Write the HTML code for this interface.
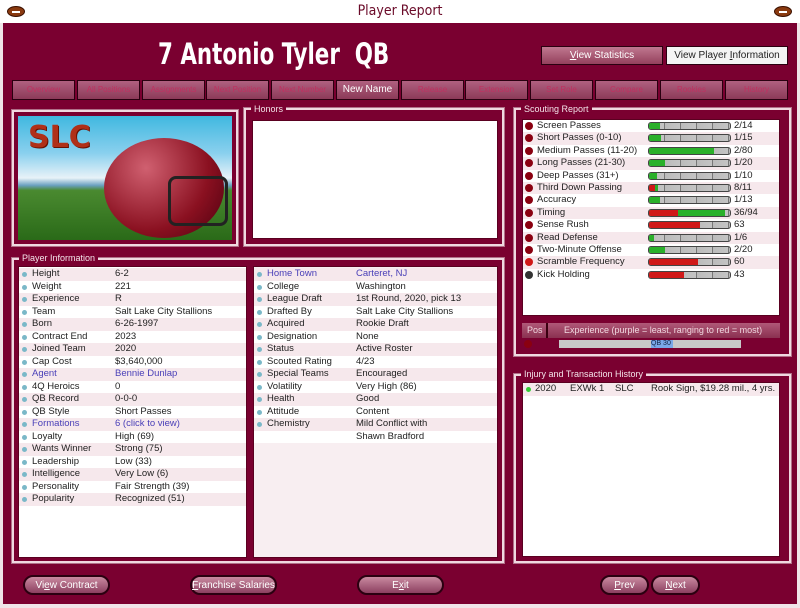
<!DOCTYPE html>
<html><head><meta charset="utf-8"><style>
*{margin:0;padding:0;box-sizing:border-box}
body{width:800px;height:608px;background:#f0e4e8;font-family:"Liberation Sans",sans-serif;position:relative;overflow:hidden}
.a{position:absolute}
#title{left:0;top:0;width:800px;height:23px;background:#fff;text-align:center;font-size:14px;color:#6a0a28;line-height:23px;font-family:"DejaVu Sans Condensed","Liberation Sans",sans-serif}
.ball{width:18px;height:11px;border-radius:50%;background:#8a3a10;border:1px solid #3a1000;top:6px}
.ball:after{content:"";position:absolute;left:4px;top:4px;width:8px;height:2px;background:#fff}
#main{left:3px;top:23px;width:794px;height:581px;background:#7a0030}
#name{left:158px;top:37px;font-size:29px;color:#fff;font-family:"DejaVu Sans Condensed","Liberation Sans",sans-serif;font-weight:bold;transform:scaleX(.82);transform-origin:left;white-space:pre}
.btn{background:linear-gradient(#c07890,#94405c);border:1px solid #2a0010;color:#fff;font-size:10px;text-align:center}
.tab{top:80px;height:20px;width:63px;background:linear-gradient(#b06080,#8c3a58);border:1px solid #2a0010;color:#c03060;font-size:8px;line-height:18px;text-align:center}
.fs{border:2px solid #f0d8e0;outline:1px solid #b07088}
.lg{font-size:9px;color:#f4e4ea;background:#7a0030;padding:0 3px;line-height:10px}
.wb{background:#fff;border:1px solid #5a0020}
.row{height:12.5px;font-size:9.5px;line-height:12.5px;color:#222;position:relative;white-space:nowrap}
.row:nth-child(odd){background:#f6e8ec}
.row i{position:absolute;left:3px;top:4px;width:5px;height:5px;border-radius:50%;background:#7ab8c8}
.row span{position:absolute}
.bl{color:#4a40b8}
.sr{height:12.4px;font-size:9.5px;line-height:12.4px;color:#222;position:relative}
.sr:nth-child(even){background:#f6e8ec}
.sr b{position:absolute;left:2px;top:2px;width:8px;height:8px;border-radius:50%;background:#8a0010;font-weight:normal}
.sr span{position:absolute;left:14px}
.bar{position:absolute;left:125px;top:2px;width:83px;height:8px;border:1px solid #444;border-radius:3px;background:repeating-linear-gradient(90deg,#bbb 0,#c4c4c4 15px,#777 15px,#777 16px);overflow:hidden}
.bar u{position:absolute;top:0;height:100%;left:0}
.g{background:#2ab02a}.r{background:#d01818}
.sr em{position:absolute;left:211px;font-style:normal}
.pb{border-radius:10px;height:20px;line-height:18px;background:linear-gradient(#c98aa0,#8c4060);border:2px solid #2a0010;color:#fff;font-size:10px;text-align:center;top:575px}
</style></head><body>
<div class="a" id="title">Player Report</div>
<div class="a ball" style="left:7px"></div><div class="a ball" style="left:774px"></div>
<div class="a" id="main"></div>
<div class="a" id="name">7 Antonio Tyler  QB</div>
<div class="a btn" style="left:541px;top:46px;width:122px;height:19px;line-height:17px"><u>V</u>iew Statistics</div>
<div class="a btn" style="left:666px;top:46px;width:122px;height:19px;line-height:17px;background:#f4f4f4;color:#222">View Player <u>I</u>nformation</div>

<div class="a tab" style="left:12px">Overview</div>
<div class="a tab" style="left:77px">All Positions</div>
<div class="a tab" style="left:142px">Assignments</div>
<div class="a tab" style="left:206px">Next Position</div>
<div class="a tab" style="left:271px">Next Number</div>
<div class="a tab" style="left:336px;color:#fff;font-size:10px">New Name</div>
<div class="a tab" style="left:401px">Release</div>
<div class="a tab" style="left:465px">Extension</div>
<div class="a tab" style="left:530px">Set Role</div>
<div class="a tab" style="left:595px">Compare</div>
<div class="a tab" style="left:660px">Rookies</div>
<div class="a tab" style="left:725px;width:63px">History</div>

<div class="a fs" style="left:12px;top:110px;width:226px;height:136px"></div>
<div class="a" style="left:18px;top:116px;width:214px;height:124px;overflow:hidden;background:linear-gradient(#40b8e0 0,#8ad0ee 30%,#e8f2f8 50%,#6aa0c0 56%,#4a8a30 60%,#2a6a18 100%)">
 <div class="a" style="left:10px;top:4px;font-size:30px;font-weight:bold;color:#b03018;font-family:'DejaVu Sans';text-shadow:1px 1px 0 #6a1000">SLC</div>
 <div class="a" style="left:86px;top:22px;width:120px;height:100px;border-radius:50%;background:radial-gradient(circle at 35% 30%,#d06070,#8a1020 60%,#4a0010)"></div>
 <div class="a" style="left:150px;top:60px;width:60px;height:50px;border:3px solid #222;border-radius:8px"></div>
</div>

<div class="a fs" style="left:244px;top:108px;width:260px;height:138px"></div>
<div class="a lg" style="left:251px;top:104px">Honors</div>
<div class="a wb" style="left:252px;top:120px;width:246px;height:119px"></div>

<div class="a fs" style="left:514px;top:108px;width:277px;height:248px"></div>
<div class="a lg" style="left:521px;top:104px">Scouting Report</div>
<div class="a wb" style="left:522px;top:119px;width:258px;height:197px">
<div class="sr"><b></b><span>Screen Passes</span><div class="bar"><u class="g" style="width:14%"></u></div><em>2/14</em></div>
<div class="sr"><b></b><span>Short Passes (0-10)</span><div class="bar"><u class="g" style="width:15%"></u></div><em>1/15</em></div>
<div class="sr"><b></b><span>Medium Passes (11-20)</span><div class="bar"><u class="g" style="width:80%"></u></div><em>2/80</em></div>
<div class="sr"><b></b><span>Long Passes (21-30)</span><div class="bar"><u class="g" style="width:20%"></u></div><em>1/20</em></div>
<div class="sr"><b></b><span>Deep Passes (31+)</span><div class="bar"><u class="g" style="width:10%"></u></div><em>1/10</em></div>
<div class="sr"><b></b><span>Third Down Passing</span><div class="bar"><u class="g" style="width:11%"></u><u class="r" style="width:8%"></u></div><em>8/11</em></div>
<div class="sr"><b></b><span>Accuracy</span><div class="bar"><u class="g" style="width:13%"></u></div><em>1/13</em></div>
<div class="sr"><b></b><span>Timing</span><div class="bar"><u class="g" style="width:94%"></u><u class="r" style="width:36%"></u></div><em>36/94</em></div>
<div class="sr"><b></b><span>Sense Rush</span><div class="bar"><u class="r" style="width:63%"></u></div><em>63</em></div>
<div class="sr"><b></b><span>Read Defense</span><div class="bar"><u class="g" style="width:6%"></u></div><em>1/6</em></div>
<div class="sr"><b></b><span>Two-Minute Offense</span><div class="bar"><u class="g" style="width:20%"></u></div><em>2/20</em></div>
<div class="sr"><b style="background:#d01818"></b><span>Scramble Frequency</span><div class="bar"><u class="r" style="width:60%"></u></div><em>60</em></div>
<div class="sr"><b style="background:#333"></b><span>Kick Holding</span><div class="bar"><u class="r" style="width:43%"></u></div><em>43</em></div>
</div>
<div class="a" style="left:522px;top:323px;width:258px;height:15px;background:linear-gradient(#b05878,#8a3050);font-size:9px;color:#f0d8e0;line-height:15px">
 <span class="a" style="left:5px">Pos</span><span class="a" style="left:24px;top:0;width:2px;height:15px;background:#3a0010"></span><span class="a" style="left:42px">Experience (purple = least, ranging to red = most)</span></div>
<div class="a" style="left:524px;top:340px;width:8px;height:8px;border-radius:50%;background:#8a0010"></div>
<div class="a" style="left:559px;top:340px;width:182px;height:8px;background:#c8c8c8"><span class="a" style="left:92px;top:0;width:22px;height:8px;background:#7aa8e8;font-size:7px;line-height:8px;color:#124">QB 30</span></div>

<div class="a fs" style="left:514px;top:374px;width:277px;height:189px"></div>
<div class="a lg" style="left:521px;top:369px">Injury and Transaction History</div>
<div class="a wb" style="left:522px;top:382px;width:258px;height:175px">
 <div class="row" style="background:#f6e8ec"><i style="background:#3c3"></i><span style="left:12px">2020</span><span style="left:47px">EXWk 1</span><span style="left:92px">SLC</span><span style="left:128px">Rook Sign, $19.28 mil., 4 yrs.</span></div>
</div>

<div class="a fs" style="left:12px;top:258px;width:492px;height:305px"></div>
<div class="a lg" style="left:19px;top:253px">Player Information</div>
<div class="a wb" style="left:18px;top:266px;width:229px;height:292px;padding-top:1px">
<div class="row"><i></i><span style="left:13px">Height</span><span style="left:96px">6-2</span></div>
<div class="row"><i></i><span style="left:13px">Weight</span><span style="left:96px">221</span></div>
<div class="row"><i></i><span style="left:13px">Experience</span><span style="left:96px">R</span></div>
<div class="row"><i></i><span style="left:13px">Team</span><span style="left:96px">Salt Lake City Stallions</span></div>
<div class="row"><i></i><span style="left:13px">Born</span><span style="left:96px">6-26-1997</span></div>
<div class="row"><i></i><span style="left:13px">Contract End</span><span style="left:96px">2023</span></div>
<div class="row"><i></i><span style="left:13px">Joined Team</span><span style="left:96px">2020</span></div>
<div class="row"><i></i><span style="left:13px">Cap Cost</span><span style="left:96px">$3,640,000</span></div>
<div class="row bl"><i></i><span style="left:13px">Agent</span><span style="left:96px">Bennie Dunlap</span></div>
<div class="row"><i></i><span style="left:13px">4Q Heroics</span><span style="left:96px">0</span></div>
<div class="row"><i></i><span style="left:13px">QB Record</span><span style="left:96px">0-0-0</span></div>
<div class="row"><i></i><span style="left:13px">QB Style</span><span style="left:96px">Short Passes</span></div>
<div class="row bl"><i></i><span style="left:13px">Formations</span><span style="left:96px">6 (click to view)</span></div>
<div class="row"><i></i><span style="left:13px">Loyalty</span><span style="left:96px">High (69)</span></div>
<div class="row"><i></i><span style="left:13px">Wants Winner</span><span style="left:96px">Strong (75)</span></div>
<div class="row"><i></i><span style="left:13px">Leadership</span><span style="left:96px">Low (33)</span></div>
<div class="row"><i></i><span style="left:13px">Intelligence</span><span style="left:96px">Very Low (6)</span></div>
<div class="row"><i></i><span style="left:13px">Personality</span><span style="left:96px">Fair Strength (39)</span></div>
<div class="row"><i></i><span style="left:13px">Popularity</span><span style="left:96px">Recognized (51)</span></div>
</div>
<div class="a wb" style="left:253px;top:266px;width:245px;height:292px;padding-top:1px;background:#f8eef1">
<div class="row bl"><i></i><span style="left:13px">Home Town</span><span style="left:102px">Carteret, NJ</span></div>
<div class="row" style="background:#fff"><i></i><span style="left:13px">College</span><span style="left:102px">Washington</span></div>
<div class="row"><i></i><span style="left:13px">League Draft</span><span style="left:102px">1st Round, 2020, pick 13</span></div>
<div class="row" style="background:#fff"><i></i><span style="left:13px">Drafted By</span><span style="left:102px">Salt Lake City Stallions</span></div>
<div class="row"><i></i><span style="left:13px">Acquired</span><span style="left:102px">Rookie Draft</span></div>
<div class="row" style="background:#fff"><i></i><span style="left:13px">Designation</span><span style="left:102px">None</span></div>
<div class="row"><i></i><span style="left:13px">Status</span><span style="left:102px">Active Roster</span></div>
<div class="row" style="background:#fff"><i></i><span style="left:13px">Scouted Rating</span><span style="left:102px">4/23</span></div>
<div class="row"><i></i><span style="left:13px">Special Teams</span><span style="left:102px">Encouraged</span></div>
<div class="row" style="background:#fff"><i></i><span style="left:13px">Volatility</span><span style="left:102px">Very High (86)</span></div>
<div class="row"><i></i><span style="left:13px">Health</span><span style="left:102px">Good</span></div>
<div class="row" style="background:#fff"><i></i><span style="left:13px">Attitude</span><span style="left:102px">Content</span></div>
<div class="row"><i></i><span style="left:13px">Chemistry</span><span style="left:102px">Mild Conflict with</span></div>
<div class="row" style="background:#fff"><span style="left:102px">Shawn Bradford</span></div>
</div>

<div class="a pb" style="left:23px;width:87px">Vi<u>e</u>w Contract</div>
<div class="a pb" style="left:190px;width:87px"><u>F</u>ranchise Salaries</div>
<div class="a pb" style="left:357px;width:87px">E<u>x</u>it</div>
<div class="a pb" style="left:600px;width:49px"><u>P</u>rev</div>
<div class="a pb" style="left:651px;width:49px"><u>N</u>ext</div>
</body></html>
